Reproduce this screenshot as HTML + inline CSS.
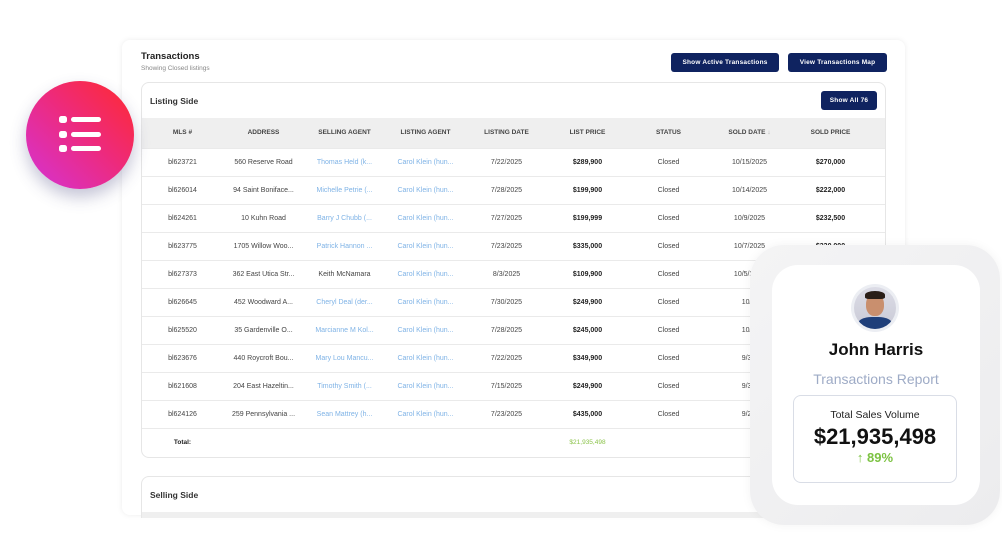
<!DOCTYPE html>
<html><head><style>
*{margin:0;padding:0;box-sizing:border-box}
body{width:1002px;height:550px;background:#fff;position:relative;overflow:hidden;font-family:"Liberation Sans",sans-serif;color:#333}
.panel{position:absolute;left:122px;top:40px;width:783px;height:475px;background:#fff;border-radius:8px;box-shadow:0 0 6px rgba(0,0,0,.08)}
.t1{position:absolute;left:141px;top:51px;font-size:9.5px;font-weight:bold;color:#222}
.t2{position:absolute;left:141px;top:65px;font-size:6.5px;color:#888}
.btn{position:absolute;background:#0f2360;color:#fff;font-size:6.5px;font-weight:bold;border-radius:3px;display:flex;align-items:center;justify-content:center;letter-spacing:.2px}
.card{position:absolute;left:141px;width:745px;background:#fff;border:1px solid #e6e6e6;border-radius:8px;overflow:hidden}
.card h3{position:absolute;left:8px;font-size:8.5px;font-weight:bold;color:#333}
table{position:absolute;left:0;top:35px;border-collapse:collapse;width:745px;table-layout:fixed}
th{height:30px;background:#efefef;font-size:6.5px;font-weight:bold;color:#444}
td{height:28px;border-top:1px solid #eaeaea;font-size:7px;text-align:center;color:#444;white-space:nowrap;overflow:hidden}
td.b{font-weight:bold;color:#222}
td.l{color:#7fb3e6}
.ov{position:absolute;left:750px;top:245px;width:250px;height:280px;border-radius:34px;background:linear-gradient(135deg,#f4f4f5,#ececee);box-shadow:0 0 10px rgba(0,0,0,.05)}
.in{position:absolute;left:772px;top:265px;width:208px;height:240px;border-radius:26px;background:#fff}
</style></head><body>
<div class="panel"></div>
<div class="t1">Transactions</div>
<div class="t2">Showing Closed listings</div>
<div class="btn" style="left:671px;top:53px;width:108px;height:19px">Show Active Transactions</div>
<div class="btn" style="left:788px;top:53px;width:99px;height:19px">View Transactions Map</div>
<div class="card" style="top:82px;height:376px">
<h3 style="top:13px">Listing Side</h3>
<div class="btn" style="left:679px;top:8px;width:56px;height:19px">Show All 76</div>
<table>
<colgroup><col style="width:81px"><col style="width:81px"><col style="width:81px"><col style="width:81px"><col style="width:81px"><col style="width:81px"><col style="width:81px"><col style="width:81px"><col style="width:81px"><col style="width:16px"></colgroup>
<tr><th>MLS #</th><th>ADDRESS</th><th>SELLING AGENT</th><th>LISTING AGENT</th><th>LISTING DATE</th><th>LIST PRICE</th><th>STATUS</th><th>SOLD DATE <span style="color:#aaa">↓</span></th><th>SOLD PRICE</th><th></th></tr>
<tr><td>bl623721</td><td>560 Reserve Road</td><td class="l">Thomas Held (k...</td><td class="l">Carol Klein (hun...</td><td>7/22/2025</td><td class="b">$289,900</td><td>Closed</td><td>10/15/2025</td><td class="b">$270,000</td><td></td></tr>
<tr><td>bl626014</td><td>94 Saint Boniface...</td><td class="l">Michelle Petrie (...</td><td class="l">Carol Klein (hun...</td><td>7/28/2025</td><td class="b">$199,900</td><td>Closed</td><td>10/14/2025</td><td class="b">$222,000</td><td></td></tr>
<tr><td>bl624261</td><td>10 Kuhn Road</td><td class="l">Barry J Chubb (...</td><td class="l">Carol Klein (hun...</td><td>7/27/2025</td><td class="b">$199,999</td><td>Closed</td><td>10/9/2025</td><td class="b">$232,500</td><td></td></tr>
<tr><td>bl623775</td><td>1705 Willow Woo...</td><td class="l">Patrick Hannon ...</td><td class="l">Carol Klein (hun...</td><td>7/23/2025</td><td class="b">$335,000</td><td>Closed</td><td>10/7/2025</td><td class="b">$330,000</td><td></td></tr>
<tr><td>bl627373</td><td>362 East Utica Str...</td><td>Keith McNamara</td><td class="l">Carol Klein (hun...</td><td>8/3/2025</td><td class="b">$109,900</td><td>Closed</td><td>10/5/2025</td><td></td><td></td></tr>
<tr><td>bl626645</td><td>452 Woodward A...</td><td class="l">Cheryl Deal (der...</td><td class="l">Carol Klein (hun...</td><td>7/30/2025</td><td class="b">$249,900</td><td>Closed</td><td>10/2/</td><td></td><td></td></tr>
<tr><td>bl625520</td><td>35 Gardenville O...</td><td class="l">Marcianne M Kol...</td><td class="l">Carol Klein (hun...</td><td>7/28/2025</td><td class="b">$245,000</td><td>Closed</td><td>10/2/</td><td></td><td></td></tr>
<tr><td>bl623676</td><td>440 Roycroft Bou...</td><td class="l">Mary Lou Mancu...</td><td class="l">Carol Klein (hun...</td><td>7/22/2025</td><td class="b">$349,900</td><td>Closed</td><td>9/30/</td><td></td><td></td></tr>
<tr><td>bl621608</td><td>204 East Hazeltin...</td><td class="l">Timothy Smith (...</td><td class="l">Carol Klein (hun...</td><td>7/15/2025</td><td class="b">$249,900</td><td>Closed</td><td>9/30/</td><td></td><td></td></tr>
<tr><td>bl624126</td><td>259 Pennsylvania ...</td><td class="l">Sean Mattrey (h...</td><td class="l">Carol Klein (hun...</td><td>7/23/2025</td><td class="b">$435,000</td><td>Closed</td><td>9/29/</td><td></td><td></td></tr>
<tr><td class="b" style="font-size:6.5px">Total:</td><td></td><td></td><td></td><td></td><td style="color:#8bc34a;font-size:6.5px">$21,935,498</td><td></td><td></td><td></td><td></td></tr>
</table>
</div>
<div class="card" style="top:476px;height:42px;border-bottom:none;border-radius:8px 8px 0 0">
<h3 style="top:13px">Selling Side</h3>
<div style="position:absolute;left:0;top:35px;width:745px;height:10px;background:#efefef"></div>
</div>
<div style="position:absolute;left:26px;top:81px;width:108px;height:108px;border-radius:50%;background:linear-gradient(45deg,#d433d6,#ee2a7a 55%,#ff2a2e);box-shadow:0 8px 16px rgba(60,60,120,.3)"></div>
<svg style="position:absolute;left:56px;top:115px" width="48" height="40">
<g fill="#fff"><rect x="3" y="1" width="8" height="7" rx="2.5"/><rect x="3" y="16" width="8" height="7" rx="2.5"/><rect x="3" y="30" width="8" height="7" rx="2.5"/>
<rect x="15" y="2" width="30" height="5" rx="2.5"/><rect x="15" y="17" width="30" height="5" rx="2.5"/><rect x="15" y="31" width="30" height="5" rx="2.5"/></g></svg>
<div class="ov"></div>
<div class="in"></div>
<div style="position:absolute;left:851px;top:284px;width:48px;height:48px;border-radius:50%;background:#eceef3"></div>
<div style="position:absolute;left:854px;top:287px;width:42px;height:42px;border-radius:50%;background:linear-gradient(#dcdce6,#c9cad6);overflow:hidden">
<div style="position:absolute;left:12px;top:7px;width:18px;height:22px;border-radius:45%;background:#c98f6e"></div>
<div style="position:absolute;left:11px;top:4px;width:20px;height:8px;border-radius:50% 50% 20% 20%;background:#2a1e18"></div>
<div style="position:absolute;left:4px;top:30px;width:34px;height:16px;border-radius:40% 40% 0 0;background:#1f3f7a"></div></div>
<div style="position:absolute;left:772px;top:340px;width:208px;text-align:center;font-size:17px;font-weight:bold;color:#111">John Harris</div>
<div style="position:absolute;left:772px;top:371px;width:208px;text-align:center;font-size:14px;color:#9eabc6">Transactions Report</div>
<div style="position:absolute;left:793px;top:395px;width:164px;height:88px;border:1.5px solid #d9dde6;border-radius:8px;text-align:center">
<div style="margin-top:13px;font-size:10.5px;color:#222">Total Sales Volume</div>
<div style="margin-top:3px;font-size:22px;font-weight:bold;color:#111">$21,935,498</div>
<div style="margin-top:0;font-size:13px;font-weight:bold;color:#7cc242">↑ 89%</div>
</div>
</body></html>
